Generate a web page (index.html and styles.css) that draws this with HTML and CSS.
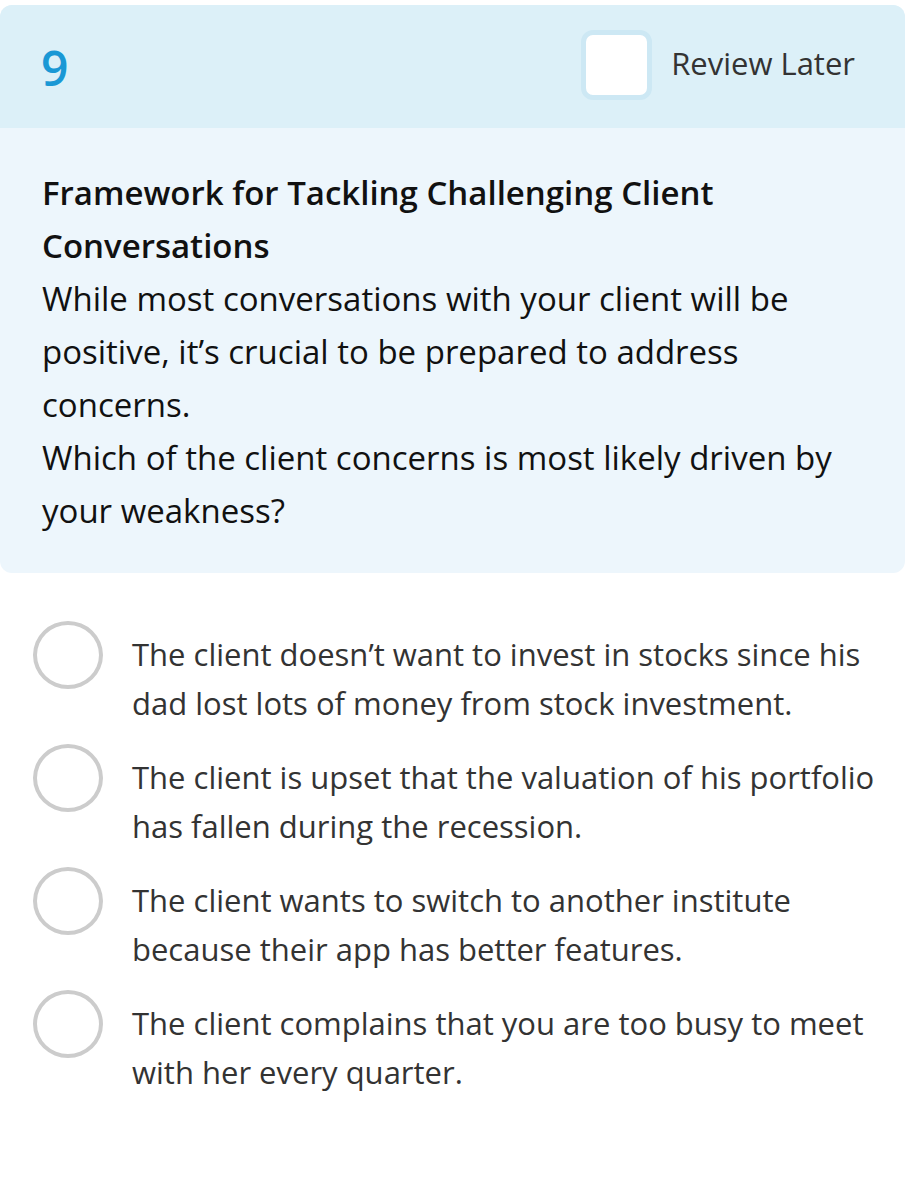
FILE: index.html
```html
<!DOCTYPE html>
<html>
<head>
<meta charset="utf-8">
<link rel="stylesheet" href="styles.css">
</head>
<body>
<div class="card">
  <div class="card-head">
    <div class="qnum">9</div>
    <label class="review">
      <span class="box"></span>
      <span class="review-text">Review Later</span>
    </label>
  </div>
  <div class="card-body">
    <div class="title">Framework for Tackling Challenging Client Conversations</div>
    <div class="text">While most conversations with your client will be positive, it’s crucial to be prepared to address concerns.</div>
    <div class="text">Which of the client concerns is most likely driven by your weakness?</div>
  </div>
</div>
<div class="options">
  <div class="option"><span class="radio"></span><span class="opt-text">The client doesn’t want to invest in stocks since his dad lost lots of money from stock investment.</span></div>
  <div class="option"><span class="radio"></span><span class="opt-text">The client is upset that the valuation of his portfolio has fallen during the recession.</span></div>
  <div class="option"><span class="radio"></span><span class="opt-text">The client wants to switch to another institute because their app has better features.</span></div>
  <div class="option"><span class="radio"></span><span class="opt-text">The client complains that you are too busy to meet with her every quarter.</span></div>
</div>
</body>
</html>
```

FILE: styles.css
```css
* { box-sizing: border-box; }
html, body { margin: 0; padding: 0; background: #fff; }
body {
  font-family: "Open Sans", "Noto Sans", sans-serif;
  color: #333;
  width: 911px;
}
.card {
  margin: 5px 6px 0 0;
  border-radius: 12px;
  overflow: hidden;
  background: #edf6fc;
}
.card-head {
  height: 123px;
  background: #dcf0f8;
  display: flex;
  align-items: center;
  justify-content: space-between;
  padding: 0 50px 0 41px;
}
.qnum {
  font-size: 48px;
  font-weight: 600;
  color: #1a98d5;
  line-height: 1;
  margin-top: 2px;
}
.review {
  display: flex;
  align-items: center;
  gap: 19px;
  margin-top: -4px;
}
.box {
  width: 71px;
  height: 70px;
  border: 5px solid #cde8f4;
  border-radius: 12px;
  background: #fff;
}
.review-text {
  font-size: 31px;
  color: #333;
  margin-top: -4px;
}
.card-body {
  padding: 38px 42px 36px 42px;
}
.title {
  font-size: 33px;
  font-weight: 600;
  line-height: 53px;
  color: #111;
}
.text {
  font-size: 33px;
  line-height: 53px;
  color: #111;
}
.options {
  padding: 48px 30px 0 33px;
  display: flex;
  flex-direction: column;
  gap: 16px;
}
.option {
  display: flex;
  align-items: flex-start;
  gap: 29px;
}
.radio {
  flex: none;
  width: 70px;
  height: 68px;
  border: 4px solid #cccccc;
  border-radius: 50%;
}
.opt-text {
  font-size: 31px;
  line-height: 49px;
  color: #333;
  padding-top: 9px;
}
```
